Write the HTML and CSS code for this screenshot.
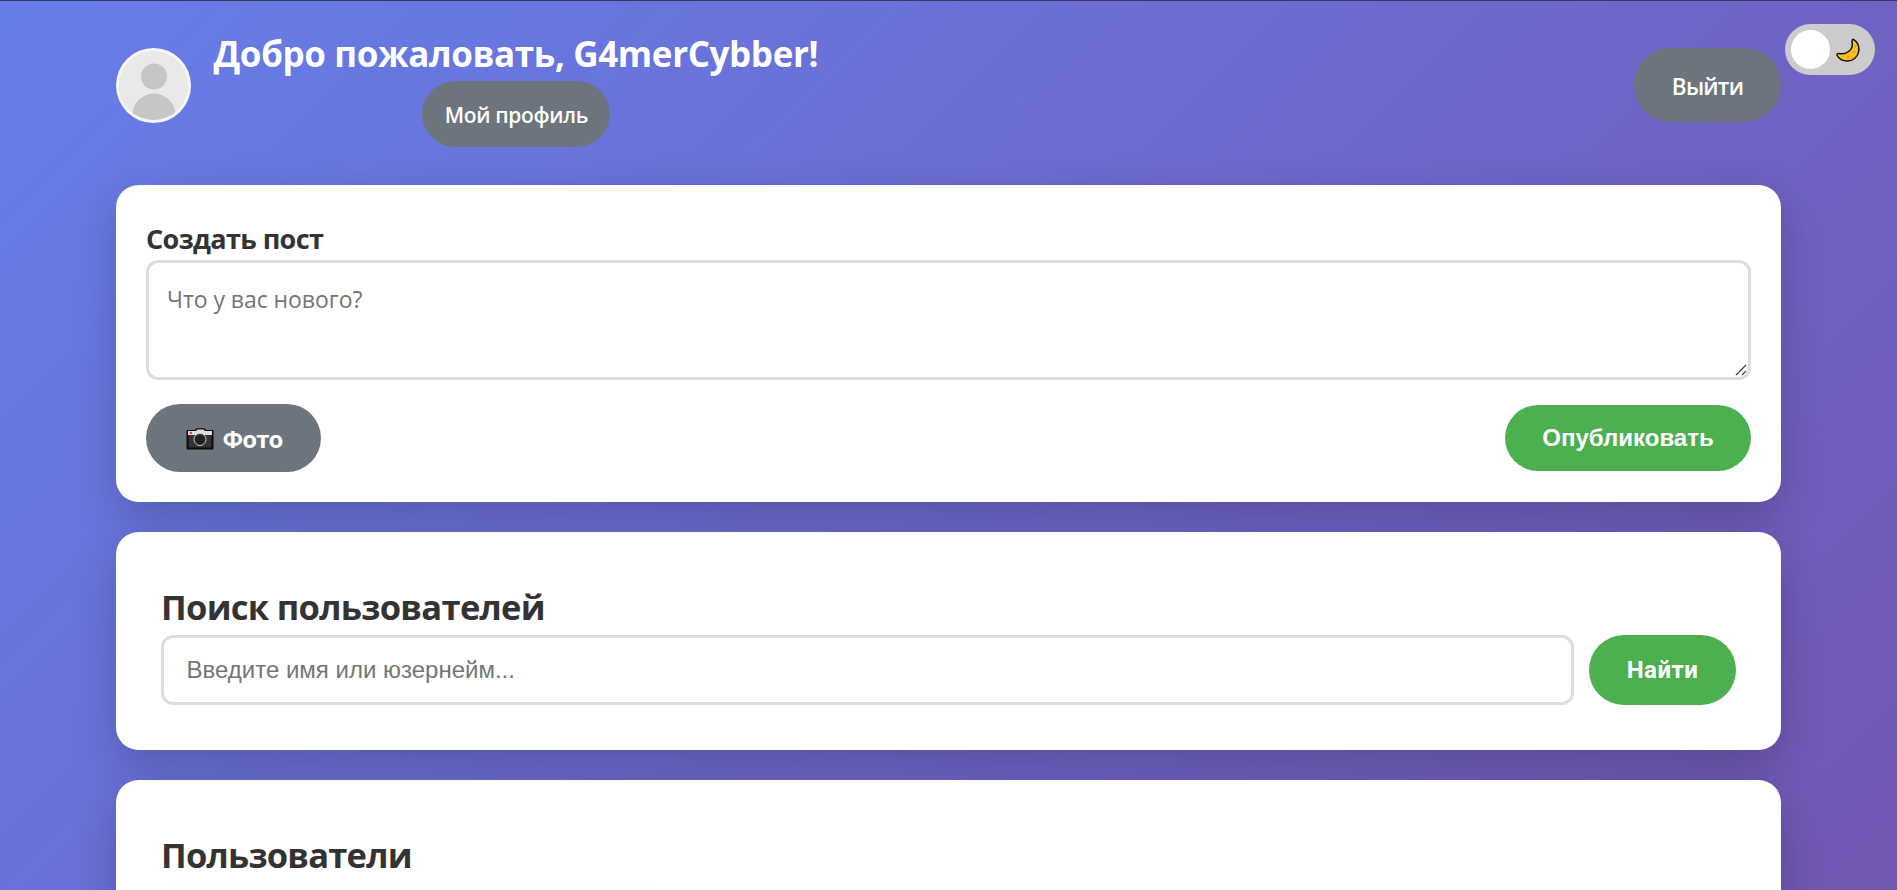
FILE: index.html
```html
<!DOCTYPE html>
<html lang="ru">
<head>
<meta charset="utf-8">
<title>Главная</title>
<link rel="stylesheet" href="styles.css">
</head>
<body>
<button class="theme-toggle" aria-label="Тема">
  <span class="knob"></span>
  <svg class="moon" viewBox="0 0 24 24"><path d="M17 1.200C21 3 23.500 8 22.800 13C22 19 17 23 11.500 23C7.500 23 3 21 1.200 17.500C.7 16 1.800 15.200 3.200 15.600C10 17 17 12 16.200 5.500C16 4 15.500 1.500 17 1.200Z" fill="#fcc21b" stroke="#111" stroke-width="1.500" stroke-linejoin="round"/><g fill="#f19534"><circle cx="19.500" cy="8" r="1"/><circle cx="18" cy="14" r="1.300"/><circle cx="12" cy="19" r="1.300"/><circle cx="7" cy="18.500" r=".8"/></g></svg>
</button>
<div class="container">
  <header class="header">
    <div class="user">
      <svg class="avatar" viewBox="0 0 75 75"><defs><clipPath id="c"><circle cx="37.500" cy="37.500" r="34.500"/></clipPath></defs><circle cx="37.500" cy="37.500" r="37.500" fill="#f6f6f8"/><g clip-path="url(#c)"><rect width="75" height="75" fill="#e9e9e9"/><circle cx="38" cy="28.500" r="13" fill="#c6c6c6"/><ellipse cx="38" cy="67" rx="21.500" ry="21.500" fill="#c6c6c6"/></g></svg>
      <div class="info">
        <h1 class="title t-welcome">Добро пожаловать, G4merCybber!</h1>
        <a class="btn btn-gray btn-profile">Мой профиль</a>
      </div>
    </div>
    <a class="btn btn-gray btn-exit">Выйти</a>
  </header>
  <section class="card card-post">
    <h3 class="sub">Создать пост</h3>
    <div class="post-field">
      <textarea class="post-text" placeholder="Что у вас нового?"></textarea>
      <svg class="grip" viewBox="0 0 12 12"><path d="M1 11L11 1M7 11l4-4" stroke="#444" stroke-width="1.300" fill="none"/></svg>
    </div>
    <div class="actions">
      <label class="btn btn-gray btn-photo"><svg class="camera" viewBox="0 0 28 22"><path d="M1.500 3h8l1.500-1.800h7L19.500 3h7v17.500h-25z" fill="#333" stroke="#0c0c0c" stroke-width="2" stroke-linejoin="round"/><path d="M2 3h8l1.500-1.500h6L19 3h7v4H2z" fill="#dedede"/><circle cx="4.800" cy="5" r="1.200" fill="#e33"/><circle cx="14" cy="11.500" r="6" fill="#222" stroke="#ccc" stroke-width="1"/></svg><span>Фото</span></label>
      <button class="btn btn-green">Опубликовать</button>
    </div>
  </section>
  <section class="card">
    <h2 class="title t-search">Поиск пользователей</h2>
    <div class="search">
      <input class="search-input" placeholder="Введите имя или юзернейм...">
      <button class="btn btn-green btn-find">Найти</button>
    </div>
  </section>
  <section class="card card-users">
    <h2 class="title t-users">Пользователи</h2>
    <div class="user-card"></div>
  </section>
</div>
</body>
</html>
```
FILE: styles.css
```css
* { box-sizing: border-box; margin: 0; padding: 0; }
html { overflow: hidden; height: 890px; }
body {
  height: 890px;
  overflow: hidden;
  border-top: 1px solid #35395f;
  background: linear-gradient(135deg, #667eea 0%, #764ba2 100%) 0 0 / 100% 1676px no-repeat;
  font-family: "Open Sans", "Noto Sans", sans-serif;
  font-size: 24px;
  line-height: 1.6;
  color: #333;
}
.container { width: 1665px; margin: 0 auto; padding-top: 24px; }
.header { display: flex; justify-content: space-between; align-items: center; height: 120px; margin-bottom: 40px; color: #fff; }
.user { display: flex; align-items: center; gap: 22.500px; }
.avatar { width: 75px; height: 75px; }
.info { text-align: center; display: flex; flex-direction: column; align-items: center; padding-top: 2px; }
.title { font-size: 34.500px; line-height: 57.600px; white-space: nowrap; padding-top: 1px; height: 57.600px; }
.info .title { font-size: 35px; line-height: 56px; height: 56px; padding-top: 1px; }
.t-welcome { letter-spacing: -.38px; }
.t-search { letter-spacing: -.7px; }
.t-users { letter-spacing: -.78px; }
.sub { font-size: 27px; line-height: 45px; height: 45px; padding-top: 1px; letter-spacing: -.63px; }
.btn {
  display: flex; align-items: center; justify-content: center;
  border: 0; border-radius: 37.500px; color: #fff; white-space: nowrap;
  font: 700 24px "Liberation Sans", Arial, sans-serif;
}
.btn-gray { background: #6c757d; font-family: "Open Sans", "Noto Sans", sans-serif; }
.btn-green { background: #4caf50; width: 246px; height: 66px; }
.btn-profile { width: 188px; height: 66px; padding-top: 1px; margin-left: 1px; font-size: 21px; font-weight: 600; letter-spacing: -.32px; }
.btn-exit { width: 147px; height: 74px; padding-top: 2px; font-size: 22.500px; font-weight: 600; letter-spacing: -.75px; }
.btn-photo { width: 175px; height: 68px; gap: 8px; font-size: 24px; letter-spacing: -.9px; padding: 1px 0 0 2px; }
.camera { width: 28px; height: 22px; }
.btn-find { width: 147px; height: 70px; font-family: Roboto, sans-serif; letter-spacing: .5px; }
.card { background: #fff; border-radius: 22.500px; padding: 45px; margin-bottom: 30px; box-shadow: 0 15px 45px rgba(0, 0, 0, .2); }
.card-post { padding: 30px; }
.card-users { height: 400px; }
.post-field { position: relative; }
.post-text {
  display: block; width: 100%; height: 120px; padding: 18px; resize: none;
  border: 3px solid #ddd; border-radius: 12px; background: #fff;
  font: 23px/36px "Open Sans", "Noto Sans", sans-serif; letter-spacing: -.05px;
}
.grip { position: absolute; right: 4px; bottom: 4px; width: 12px; height: 12px; }
.actions { display: flex; justify-content: space-between; align-items: center; margin-top: 24px; }
.search { display: flex; gap: 15px; }
.search-input {
  flex: 1; height: 70px; padding: 0 22.500px; border: 3px solid #ddd; border-radius: 12px;
  font: 24px "Liberation Sans", Arial, sans-serif;
}
::placeholder { color: #757575; opacity: 1; }
.user-card { width: 506px; height: 200px; margin-top: 15px; border-radius: 15px; background: #fff; box-shadow: 0 7px 22px rgba(0, 0, 0, .08); }
.theme-toggle {
  position: absolute; top: 24px; right: 22px; width: 90px; height: 51px; padding: 0 15px 0 6px;
  display: flex; align-items: center; justify-content: space-between;
  border: 0; border-radius: 25.500px; background: #ccc;
}
.knob { width: 39px; height: 39px; border-radius: 50%; background: #fff; }
.moon { width: 24px; height: 24px; }
```
